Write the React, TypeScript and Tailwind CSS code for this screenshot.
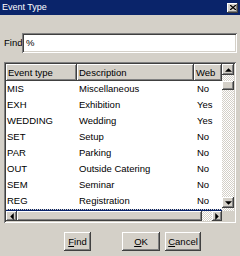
const raised =
  'shadow-[inset_-1px_-1px_#404040,inset_1px_1px_#ffffff,inset_-2px_-2px_#808080,inset_2px_2px_#d4d0c8]';
const sunken =
  'shadow-[inset_1px_1px_#808080,inset_-1px_-1px_#ffffff,inset_2px_2px_#404040,inset_-2px_-2px_#d4d0c8]';
const track =
  'bg-[repeating-conic-gradient(#ffffff_0%_25%,#d4d0c8_0%_50%)] bg-[length:2px_2px]';

const rows = [
  ['MIS', 'Miscellaneous', 'No'],
  ['EXH', 'Exhibition', 'Yes'],
  ['WEDDING', 'Wedding', 'Yes'],
  ['SET', 'Setup', 'No'],
  ['PAR', 'Parking', 'No'],
  ['OUT', 'Outside Catering', 'No'],
  ['SEM', 'Seminar', 'No'],
  ['REG', 'Registration', 'No'],
];

function Arrow({ dir }: { dir: 'up' | 'down' | 'left' | 'right' }) {
  const pts = {
    up: '0,3 6,3 3,0',
    down: '0,0 6,0 3,3',
    left: '3,0 3,6 0,3',
    right: '0,0 0,6 3,3',
  }[dir];
  const vert = dir === 'up' || dir === 'down';
  return (
    <svg width={vert ? 7 : 4} height={vert ? 4 : 7} viewBox={vert ? '0 0 6 3' : '0 0 3 6'}>
      <polygon points={pts} fill="#000" />
    </svg>
  );
}

function Header({ w, label }: { w: string; label: string }) {
  return (
    <div className={`${w} h-[17px] bg-[#d4d0c8] ${raised} flex items-center pl-[2px] shrink-0`}>
      {label}
    </div>
  );
}

export default function App() {
  return (
    <div className="w-[240px] h-[256px] bg-[#d4d0c8] flex flex-col text-[9.5px] text-black font-['Liberation_Sans',Arial,sans-serif] leading-none overflow-hidden">
      {/* Title bar */}
      <div className="h-[15px] bg-[#0a246a] flex items-center justify-between pl-[2px] pr-[2px] shrink-0">
        <span className="text-white text-[9px]">Event Type</span>
        <div className={`w-[11px] h-[10px] bg-[#d4d0c8] ${raised} flex items-center justify-center`}>
          <svg width="6" height="5" viewBox="0 0 6 5">
            <path d="M0 0 L6 5 M6 0 L0 5" stroke="#000" strokeWidth="1.3" />
          </svg>
        </div>
      </div>

      {/* Find row */}
      <div className="mt-[18px] flex items-center pl-[4px] shrink-0">
        <span className="w-[18px]">Find</span>
        <div className={`w-[215px] h-[20px] bg-white ${sunken} flex items-center pl-[4px]`}>%</div>
      </div>

      {/* Grid */}
      <div className={`mt-[9px] ml-[4px] w-[232px] h-[161px] ${sunken} p-[2px] flex flex-col shrink-0`}>
        <div className="flex h-[147px]">
          <div className="w-[216px] bg-white overflow-hidden flex flex-col">
            <div className="flex">
              <Header w="w-[71px]" label="Event type" />
              <Header w="w-[117px]" label="Description" />
              <Header w="w-[28px]" label="Web" />
            </div>
            {rows.map(([code, desc, web]) => (
              <div key={code} className="flex h-[16px] items-center shrink-0">
                <div className="w-[71px] pl-[1px]">{code}</div>
                <div className="w-[117px] pl-[2px]">{desc}</div>
                <div className="w-[28px] pl-[3px]">{web}</div>
              </div>
            ))}
            <div className="h-[16px] shrink-0 bg-[#0a246a] border-t border-dotted border-[#d4d0c8]" />
          </div>
          <div className={`w-[12px] flex flex-col ${track}`}>
            <div className={`h-[11px] bg-[#d4d0c8] ${raised} flex items-center justify-center shrink-0`}>
              <Arrow dir="up" />
            </div>
            <div className={`mt-[6px] h-[9px] bg-[#d4d0c8] ${raised} shrink-0`} />
            <div className="flex-1" />
            <div className={`h-[11px] mb-[3px] bg-[#d4d0c8] ${raised} flex items-center justify-center shrink-0`}>
              <Arrow dir="down" />
            </div>
          </div>
        </div>
        <div className="flex h-[10px]">
          <div className={`w-[216px] flex ${track}`}>
            <div className={`w-[11px] bg-[#d4d0c8] ${raised} flex items-center justify-center shrink-0`}>
              <Arrow dir="left" />
            </div>
            <div className={`w-[185px] bg-[#d4d0c8] ${raised} shrink-0`} />
            <div className="flex-1" />
            <div className={`w-[10px] bg-[#d4d0c8] ${raised} flex items-center justify-center shrink-0`}>
              <Arrow dir="right" />
            </div>
          </div>
          <div className="flex-1 bg-[#d4d0c8]" />
        </div>
      </div>

      {/* Buttons */}
      <div className="mt-[9px] flex shrink-0">
        <button className={`ml-[64px] w-[27px] h-[19px] bg-[#d4d0c8] ${raised} flex items-center justify-center`}>
          <span><span className="underline">F</span>ind</span>
        </button>
        <button className={`ml-[31px] w-[38px] h-[19px] bg-[#d4d0c8] ${raised} flex items-center justify-center`}>
          <span><span className="underline">O</span>K</span>
        </button>
        <button className={`ml-[5px] w-[36px] h-[19px] bg-[#d4d0c8] ${raised} flex items-center justify-center`}>
          <span><span className="underline">C</span>ancel</span>
        </button>
      </div>
    </div>
  );
}
